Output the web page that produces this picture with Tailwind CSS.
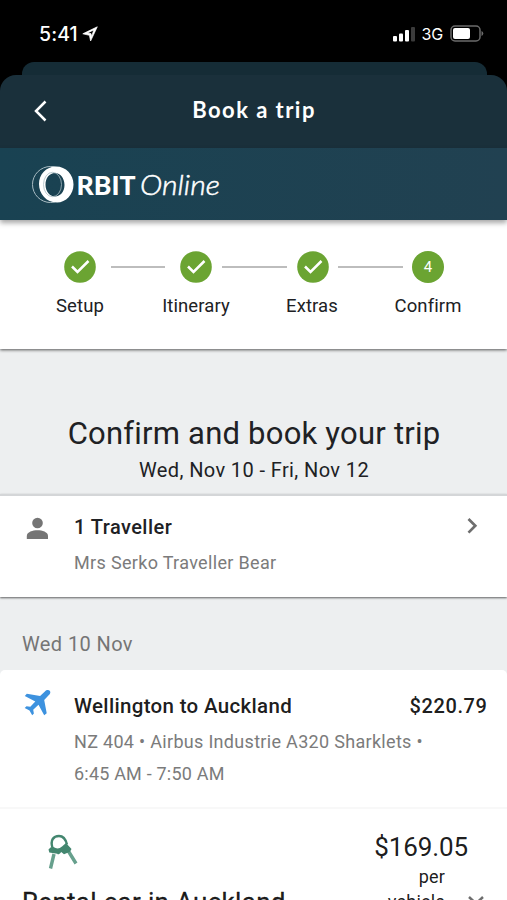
<!DOCTYPE html>
<html lang="en">
<head>
<meta charset="utf-8">
<title>Book a trip</title>
<script src="https://cdn.jsdelivr.net/npm/@tailwindcss/browser@4"></script>
</head>
<body class="bg-black">
<div class="flex h-[900px] w-[507px] flex-col overflow-hidden bg-black font-['Roboto',sans-serif] text-[#202124]">
  <!-- Status bar -->
  <div class="flex h-[62px] shrink-0 items-center pt-[5px] pl-[39px] pr-[23px] font-['Inter',sans-serif] text-white">
    <span class="text-[19.5px] font-medium leading-6 tracking-[0.1px]">5:41</span>
    <svg class="ml-[4px] h-4 w-4" viewBox="0 0 16 16"><path fill="#fff" stroke="#fff" stroke-width=".7" stroke-linejoin="round" fill-rule="evenodd" d="M15.300.8 8.600 15 7.400 9.300.8 7.800zM11.700 4 5.500 6.900l3.500.7.7 2.900z"/></svg>
    <svg class="ml-auto h-4 w-6" viewBox="0 0 24 16"><g fill="#fff"><rect x="1" y="10" width="4" height="5.500" rx="1"/><rect x="7" y="7.500" width="4" height="8" rx="1"/><rect x="13" y="4" width="4" height="11.500" rx="1"/></g><rect x="19" y="1" width="4" height="14.500" rx="1" fill="#3b3b3b"/></svg>
    <span class="ml-[6px] text-[16px] leading-6 tracking-[-0.2px]">3G</span>
    <svg class="ml-[7px] h-[17px] w-[34px]" viewBox="0 0 34 17"><rect x="1" y="1" width="29" height="15" rx="4" fill="none" stroke="#6b6b6b" stroke-width="1.500"/><rect x="3" y="3" width="17" height="11" rx="2" fill="#fff"/><path d="M31.500 6v5q1.800-.8 1.800-2.500T31.500 6" fill="#6b6b6b"/></svg>
  </div>
  <div class="mr-[20px] ml-[22px] h-[13px] shrink-0 rounded-t-[12px] bg-[#152c36]"></div>
  <!-- Title bar -->
  <div class="grid h-[73px] shrink-0 grid-cols-[80px_1fr_80px] items-center rounded-t-[16px] bg-[#1a303b] text-white">
    <svg class="-mt-[2px] ml-[32px] h-6 w-4" viewBox="0 0 16 24" fill="none" stroke="#fff" stroke-width="2.500"><path d="M13.500 2.500 4 12l9.500 9.500"/></svg>
    <h1 class="pb-[4px] pl-[1px] text-center font-['Lato',sans-serif] text-[22px] font-bold leading-7 tracking-[1.450px]">Book a trip</h1>
  </div>
  <!-- Brand bar -->
  <div class="z-10 h-[72px] shrink-0 bg-linear-to-r from-[#194252] to-[#214151] shadow-[0_3px_5px_rgba(0,0,0,0.35)]">
    <svg class="h-[72px] w-[240px]" viewBox="0 0 240 72" fill="#fff">
      <circle cx="50.500" cy="36.500" r="18" fill="none" stroke="#a9bcc3" stroke-width="1"/>
      <path fill-rule="evenodd" d="M56 18.500c10 0 17.500 8 17.500 18S66 54.500 57 54.500c-11 0-18-9-18-18.500s7-17.500 17-17.500M55 25c-5.500 0-9.500 5-9.500 11.800 0 6.200 4 11.700 9.500 11.700s9.500-5 9.500-11.500S60.500 25 55 25"/>
      <ellipse cx="52.500" cy="36.500" rx="9" ry="12.200" fill="none" stroke="#a9bcc3" stroke-width=".8"/>
      <text x="76.500" y="47" font-family="Lato" font-weight="900" font-size="27" textLength="59" lengthAdjust="spacingAndGlyphs">RBIT</text>
      <text x="140" y="47" font-family="Lato" font-weight="300" font-style="italic" font-size="28" textLength="80" lengthAdjust="spacingAndGlyphs" stroke="#fff" stroke-width=".5">Online</text>
    </svg>
  </div>
  <!-- Booking steps -->
  <div class="z-[5] h-[129px] shrink-0 bg-white pt-[31px] shadow-[0_1px_3px_rgba(0,0,0,0.65)]">
    <div class="flex items-center pl-[64px]">
      <svg class="h-8 w-8" viewBox="0 0 32 32"><circle cx="16" cy="16" r="15.800" fill="#6ba432"/><path d="m8 15.500 5.500 5.500L24.500 10" fill="none" stroke="#fff" stroke-width="2.500"/></svg>
      <div class="mx-[15px] h-[1.500px] w-[54px] bg-[#bdbdbd]"></div>
      <svg class="h-8 w-8" viewBox="0 0 32 32"><circle cx="16" cy="16" r="15.800" fill="#6ba432"/><path d="m8 15.500 5.500 5.500L24.500 10" fill="none" stroke="#fff" stroke-width="2.500"/></svg>
      <div class="mx-[10px] h-[1.500px] w-[64.500px] bg-[#bdbdbd]"></div>
      <svg class="h-8 w-8" viewBox="0 0 32 32"><circle cx="16" cy="16" r="15.800" fill="#6ba432"/><path d="m8 15.500 5.500 5.500L24.500 10" fill="none" stroke="#fff" stroke-width="2.500"/></svg>
      <div class="mx-[9.500px] h-[1.500px] w-[64.500px] bg-[#bdbdbd]"></div>
      <div class="flex h-8 w-8 items-center justify-center rounded-full bg-[#6ba432] text-[15px] text-white">4</div>
    </div>
    <div class="ml-[22px] mt-[11px] grid w-[464px] grid-cols-4 text-center text-[18.500px] leading-6 tracking-[0.100px]">
      <span>Setup</span><span>Itinerary</span><span>Extras</span><span>Confirm</span>
    </div>
  </div>
  <!-- Heading -->
  <div class="h-[145px] shrink-0 bg-[#edeff0] pt-[66px] text-center">
    <h2 class="pl-px text-[31px] leading-[38px] tracking-[0.220px]">Confirm and book your trip</h2>
    <p class="mt-[3px] pl-px text-[20px] leading-7 tracking-[0.390px]">Wed, Nov 10 - Fri, Nov 12</p>
  </div>
  <!-- Travellers -->
  <div class="z-[5] flex h-[103px] shrink-0 border-t-2 border-[#d4d6d8] bg-white pt-[17px] pl-[25px] pr-[28px] shadow-[0_1px_2px_rgba(0,0,0,0.600)]">
    <svg class="mt-[4px] h-6 w-6" viewBox="0 0 24 24" fill="#757575"><circle cx="12.500" cy="6" r="5.300"/><path d="M1.800 22v-3c0-4 6-5.700 10.700-5.700S23 15 23 19v3z"/></svg>
    <div class="ml-[25px] flex-1">
      <div class="text-[20px] font-medium leading-7 tracking-[0.450px]">1 Traveller</div>
      <div class="mt-[8px] text-[18px] leading-7 tracking-[0.330px] text-[#7b7b7b]">Mrs Serko Traveller Bear</div>
    </div>
    <svg class="mt-[3px] h-5 w-3" viewBox="0 0 12 20" fill="none" stroke="#6e6e6e" stroke-width="2.700"><path d="m1.500 3 6.800 6.800-6.800 6.800"/></svg>
  </div>
  <div class="h-[73px] shrink-0 bg-[#edeff0] pt-[33px] pl-[22px] text-[20px] leading-7 tracking-[0.400px] text-[#757575]">Wed 10 Nov</div>
  <!-- Trip items -->
  <div class="min-h-0 flex-1 bg-[#edeff0]">
    <div class="h-full rounded-t-[5px] bg-white">
      <div class="flex h-[139px] border-b-2 border-[#f8f8f8] pt-[22px] pl-[24px] pr-[20px]">
        <svg class="-mt-[2px] h-[27px] w-[27px]" viewBox="0 0 27 27" fill="#3d92df"><path d="M25.700.8c1.200 1.200.5 3-.8 4.300l-4.700 4.800 2.500 13.300-2.500 2-5.700-10.500-5.300 5 .7 3.700-1.700 1.800-2.700-4.700L.7 18l1.800-1.800 3.800.6 5-5.400L.8 6l2-2.200 13.300 2.300 4.800-4.600C22.300.1 24.500-.4 25.700.8"/></svg>
        <div class="ml-[23px] flex-1">
          <div class="flex justify-between text-[20.500px] font-medium leading-7 tracking-[0.320px] text-black/90"><span>Wellington to Auckland</span><span class="-mr-[0.500px] text-[20px] tracking-[0.600px]">$220.79</span></div>
          <div class="mt-[6px] text-[18px] leading-8 tracking-[0.310px] text-[#7b7b7b]">NZ 404 • Airbus Industrie A320 Sharklets •<br><span class="tracking-[0.200px]">6:45 AM - 7:50 AM</span></div>
        </div>
      </div>
      <div class="flex justify-between pt-[22px] pl-[22px] pr-[22px] text-black/90">
        <div class="w-[270px]">
          <svg class="ml-[24px] mt-[3px] h-9 w-8" viewBox="0 0 32 36"><g fill="none"><path d="m8 20-3.500 14.500M22 16.500l8 13" stroke="#67a08d" stroke-width="3.400"/><path d="M6.500 14C4 6 7.500 2 13 2c4 0 6.500 2.500 8 8.500" stroke="#43866f" stroke-width="2.400"/></g><path fill="#43866f" d="m4.500 13.500 3-.5q4.500 3 8.500-.5l4-3.500 5.500 6-1.500 2.700-6 2.600-2.800-2.300-1.200 1.500-2 1-.7-.8-8-1.200-.8-3z"/></svg>
          <div class="mt-[16px] whitespace-nowrap text-[26px] leading-8 tracking-[0.300px] [-webkit-text-stroke:0.3px]">Rental car in Auckland</div>
        </div>
        <div class="flex items-start">
          <div class="flex w-[96px] flex-col items-end">
            <div class="-mr-[1px] text-[26px] leading-8 tracking-[-0.100px]">$169.05</div>
            <div class="mr-[22px] mt-px text-right text-[18px] leading-[25px] tracking-[0.200px]">per<br>vehicle</div>
          </div>
          <svg class="mt-[64px] h-4 w-[18px]" viewBox="0 0 18 16" fill="none" stroke="#6e6e6e" stroke-width="2.500"><path d="m2 2 7 6.500L16 2"/></svg>
        </div>
      </div>
    </div>
  </div>
</div>
</body>
</html>
